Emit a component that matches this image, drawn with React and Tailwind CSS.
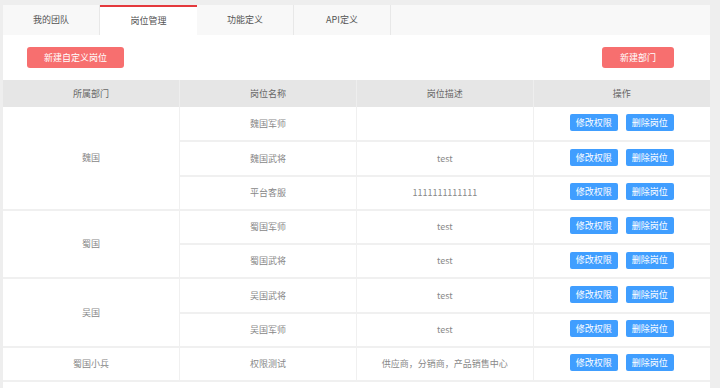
const rows = [
  { dept: '魏国', span: 3, name: '魏国军师', desc: '' },
  { name: '魏国武将', desc: 'test' },
  { name: '平台客服', desc: '1111111111111' },
  { dept: '蜀国', span: 2, name: '蜀国军师', desc: 'test' },
  { name: '蜀国武将', desc: 'test' },
  { dept: '吴国', span: 2, name: '吴国武将', desc: 'test' },
  { name: '吴国军师', desc: 'test' },
  { dept: '蜀国小兵', span: 1, name: '权限测试', desc: '供应商，分销商，产品销售中心' },
];

const tabs = ['我的团队', '岗位管理', '功能定义', 'API定义'];

export default function App() {
  return (
    <div
      className="min-h-[388px] bg-[#eeeeee] pt-[5px] pl-[3px] pr-[10px] text-[#666]"
      style={{ fontFamily: '"Noto Sans CJK SC", "Noto Sans", sans-serif' }}
    >
      <div className="bg-white min-h-[383px]">
        {/* Tabs */}
        <div className="flex h-[30px] bg-[#f8f8f8]">
          {tabs.map((t, i) => (
            <div
              key={t}
              className={
                i === 1
                  ? 'w-[97px] flex items-center justify-center bg-white border-t-[2px] border-[#e4393c] text-[9px] text-[#555]'
                  : 'w-[97px] flex items-center justify-center border-r border-[#e8e8e8] text-[9px] text-[#555]'
              }
            >
              {t}
            </div>
          ))}
        </div>

        {/* Actions */}
        <div className="flex justify-between items-center pl-[24px] pr-[36px] h-[45px]">
          <button className="w-[97px] h-[21px] rounded-[3px] bg-[#f76f6f] text-white text-[9px]">
            新建自定义岗位
          </button>
          <button className="w-[72px] h-[21px] rounded-[3px] bg-[#f76f6f] text-white text-[9px]">
            新建部门
          </button>
        </div>

        {/* Table */}
        <table className="w-full border-collapse table-fixed text-[9px]">
          <thead>
            <tr className="h-[27px] bg-[#e6e6e6] text-[#666]">
              <th className="font-normal border-r border-[#eeeeee]">所属部门</th>
              <th className="font-normal border-r border-[#eeeeee]">岗位名称</th>
              <th className="font-normal border-r border-[#eeeeee]">岗位描述</th>
              <th className="font-normal">操作</th>
            </tr>
          </thead>
          <tbody className="text-[#888]">
            {rows.map((r, i) => (
              <tr key={i} className="h-[34.25px] border-b-[2px] border-[#f0f0f0]">
                {r.dept && (
                  <td rowSpan={r.span} className="text-center border-r border-b-[2px] border-[#f0f0f0]">
                    {r.dept}
                  </td>
                )}
                <td className="text-center border-r border-[#f0f0f0]">{r.name}</td>
                <td className="text-center border-r border-[#f0f0f0]">{r.desc}</td>
                <td>
                  <div className="flex justify-center gap-[8px] pb-[2px]">
                    <button className="w-[48px] h-[17px] rounded-[2px] bg-[#409eff] text-white text-[9px]">
                      修改权限
                    </button>
                    <button className="w-[48px] h-[17px] rounded-[2px] bg-[#409eff] text-white text-[9px]">
                      删除岗位
                    </button>
                  </div>
                </td>
              </tr>
            ))}
          </tbody>
        </table>
      </div>
    </div>
  );
}
